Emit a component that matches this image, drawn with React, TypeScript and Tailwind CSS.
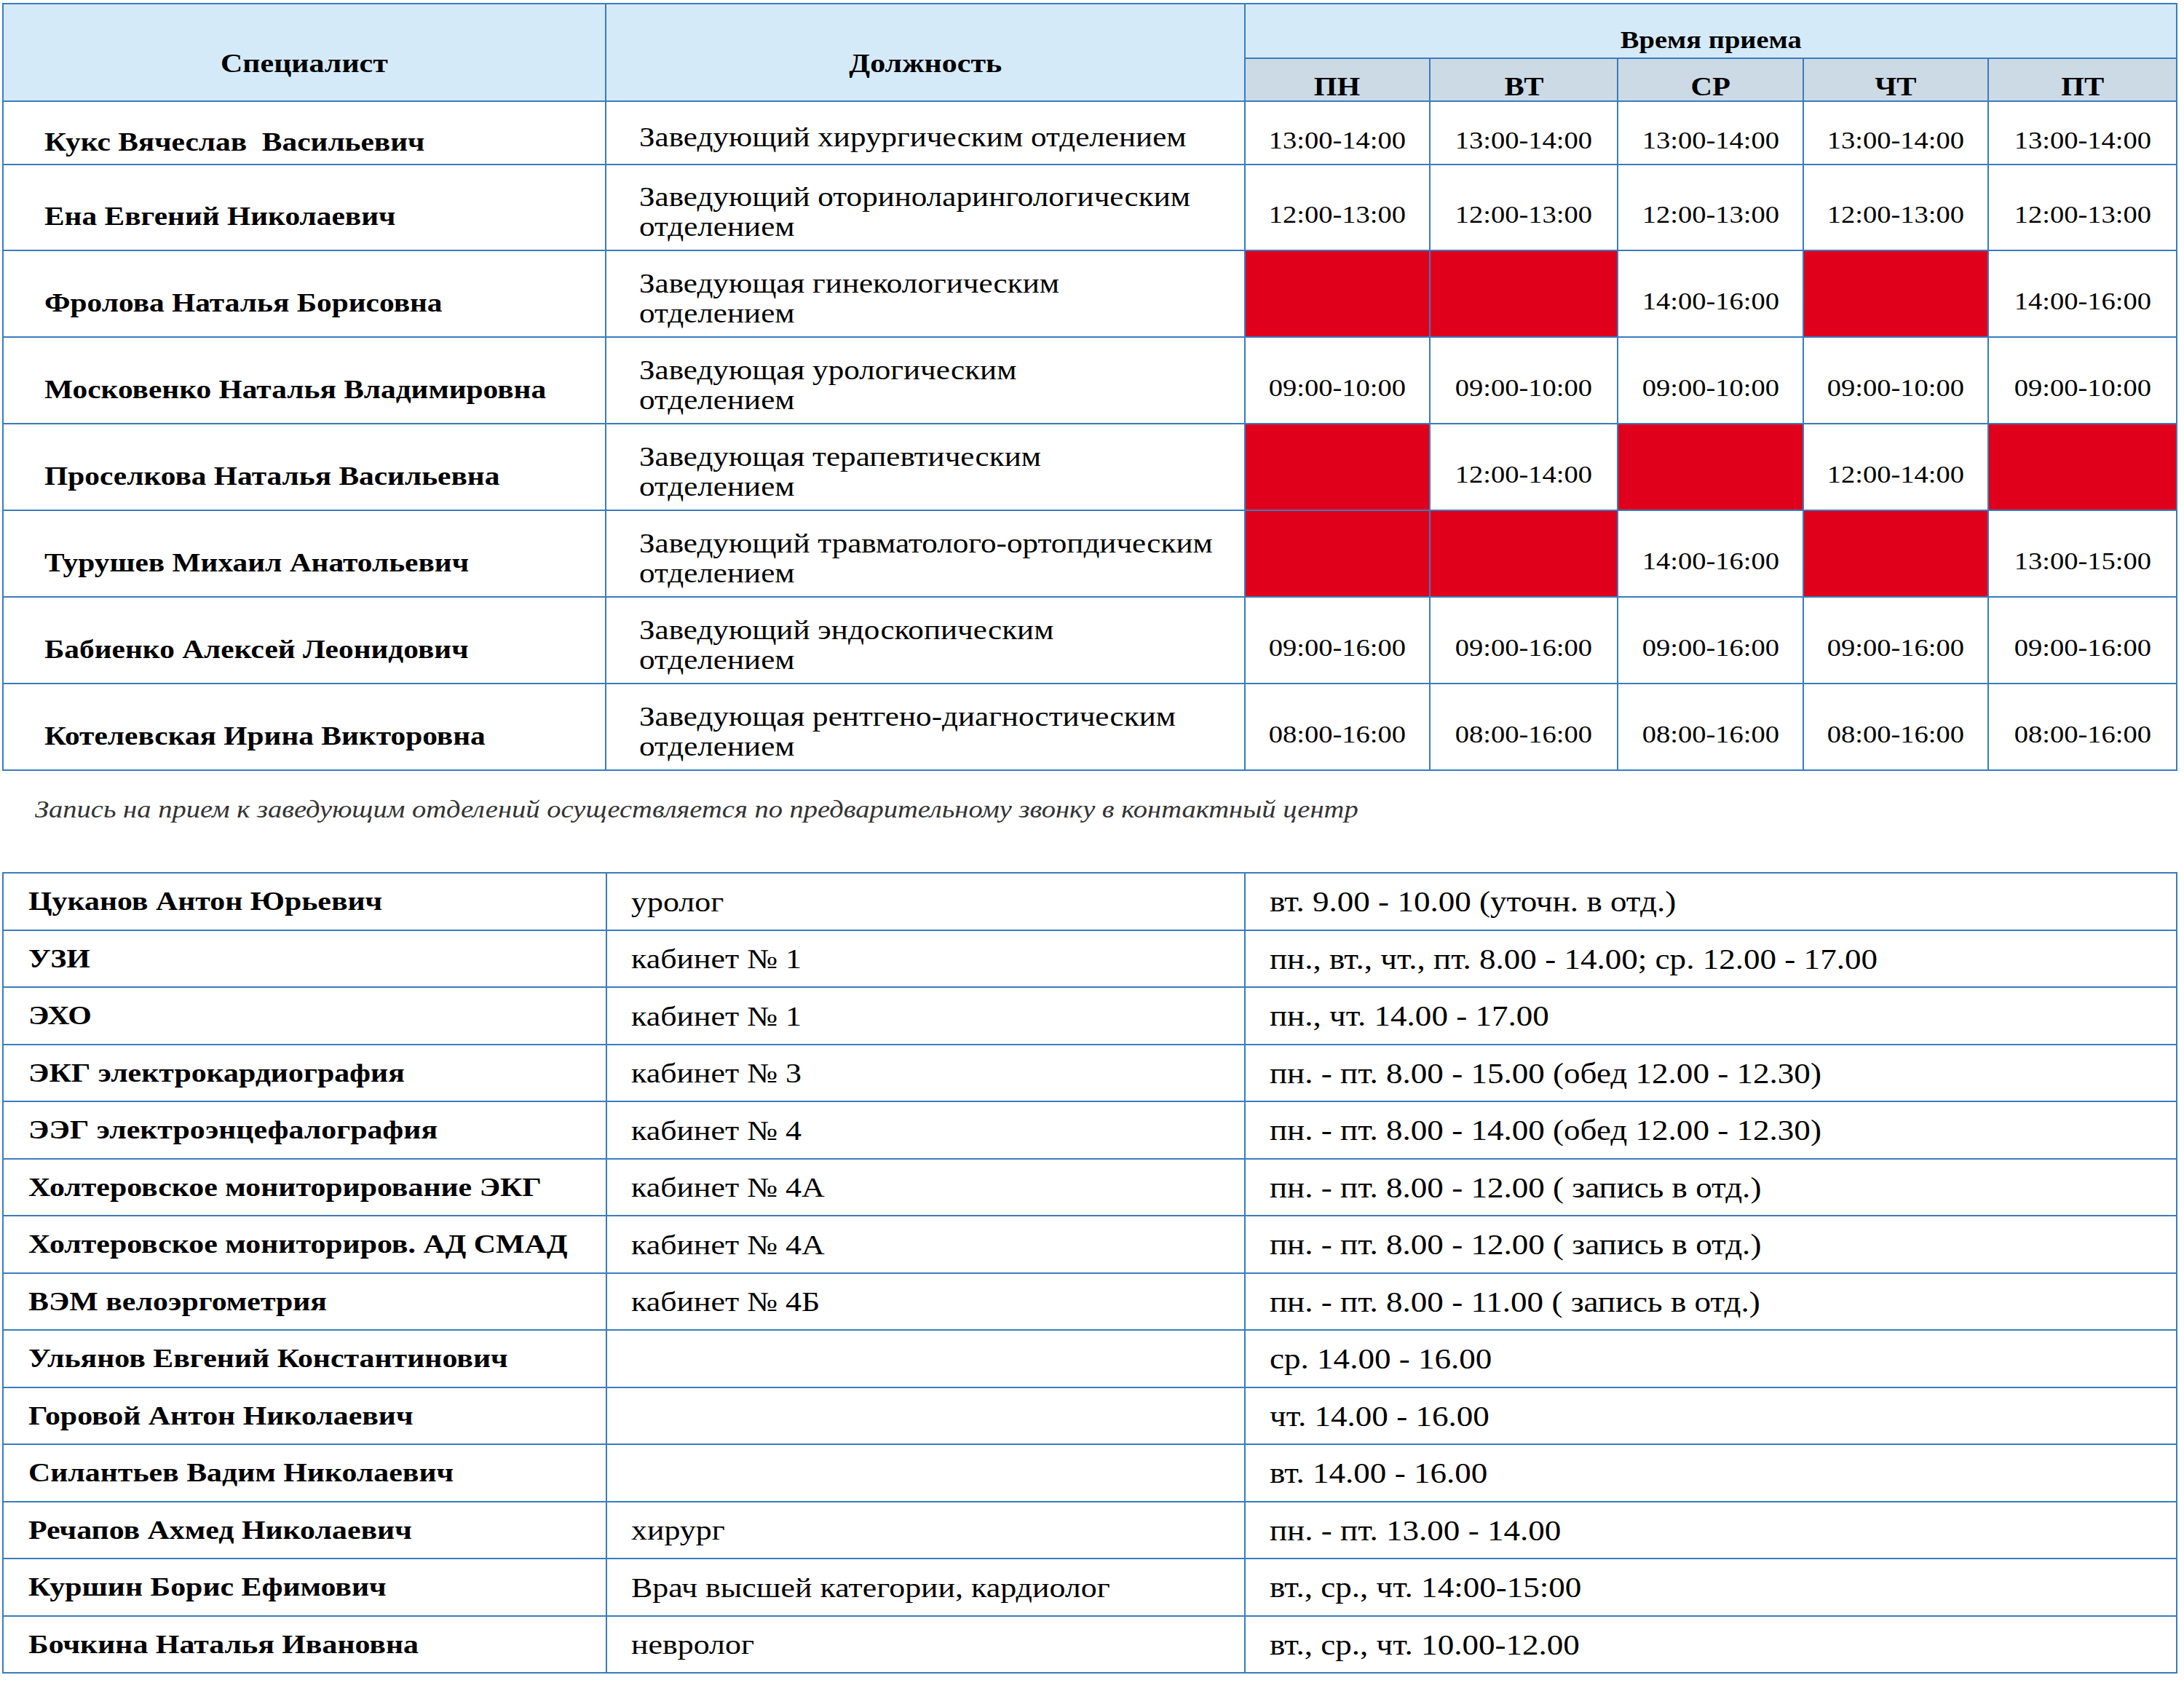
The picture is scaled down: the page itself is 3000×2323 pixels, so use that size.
import React from "react";

type Cell = string | null;

const t1Rows: { name: string; pos: string[]; times: Cell[]; h: string }[] = [
  { name: "Кукс Вячеслав  Васильевич", pos: ["Заведующий хирургическим отделением"], times: ["13:00-14:00", "13:00-14:00", "13:00-14:00", "13:00-14:00", "13:00-14:00"], h: "h-[87px]" },
  { name: "Ена Евгений Николаевич", pos: ["Заведующий оториноларингологическим", "отделением"], times: ["12:00-13:00", "12:00-13:00", "12:00-13:00", "12:00-13:00", "12:00-13:00"], h: "h-[118px]" },
  { name: "Фролова Наталья Борисовна", pos: ["Заведующая гинекологическим", "отделением"], times: [null, null, "14:00-16:00", null, "14:00-16:00"], h: "h-[119px]" },
  { name: "Московенко Наталья Владимировна", pos: ["Заведующая урологическим", "отделением"], times: ["09:00-10:00", "09:00-10:00", "09:00-10:00", "09:00-10:00", "09:00-10:00"], h: "h-[119px]" },
  { name: "Проселкова Наталья Васильевна", pos: ["Заведующая терапевтическим", "отделением"], times: [null, "12:00-14:00", null, "12:00-14:00", null], h: "h-[119px]" },
  { name: "Турушев Михаил Анатольевич", pos: ["Заведующий травматолого-ортопдическим", "отделением"], times: [null, null, "14:00-16:00", null, "13:00-15:00"], h: "h-[119px]" },
  { name: "Бабиенко Алексей Леонидович", pos: ["Заведующий эндоскопическим", "отделением"], times: ["09:00-16:00", "09:00-16:00", "09:00-16:00", "09:00-16:00", "09:00-16:00"], h: "h-[119px]" },
  { name: "Котелевская Ирина Викторовна", pos: ["Заведующая рентгено-диагностическим", "отделением"], times: ["08:00-16:00", "08:00-16:00", "08:00-16:00", "08:00-16:00", "08:00-16:00"], h: "h-[119px]" },
];

const t2Rows: [string, string, string][] = [
  ["Цуканов Антон Юрьевич", "уролог", "вт. 9.00 - 10.00 (уточн. в отд.)"],
  ["УЗИ", "кабинет № 1", "пн., вт., чт., пт. 8.00 - 14.00; ср. 12.00 - 17.00"],
  ["ЭХО", "кабинет № 1", "пн., чт. 14.00 - 17.00"],
  ["ЭКГ электрокардиография", "кабинет № 3", "пн. - пт. 8.00 - 15.00 (обед 12.00 - 12.30)"],
  ["ЭЭГ электроэнцефалография", "кабинет № 4", "пн. - пт. 8.00 - 14.00 (обед 12.00 - 12.30)"],
  ["Холтеровское мониторирование ЭКГ", "кабинет № 4А", "пн. - пт. 8.00 - 12.00 ( запись в отд.)"],
  ["Холтеровское мониториров. АД СМАД", "кабинет № 4А", "пн. - пт. 8.00 - 12.00 ( запись в отд.)"],
  ["ВЭМ велоэргометрия", "кабинет № 4Б", "пн. - пт. 8.00 - 11.00 ( запись в отд.)"],
  ["Ульянов Евгений Константинович", "", "ср. 14.00 - 16.00"],
  ["Горовой Антон Николаевич", "", "чт. 14.00 - 16.00"],
  ["Силантьев Вадим Николаевич", "", "вт. 14.00 - 16.00"],
  ["Речапов Ахмед Николаевич", "хирург", "пн. - пт. 13.00 - 14.00"],
  ["Куршин Борис Ефимович", "Врач высшей категории, кардиолог", "вт., ср., чт. 14:00-15:00"],
  ["Бочкина Наталья Ивановна", "невролог", "вт., ср., чт. 10.00-12.00"],
];

const days = ["ПН", "ВТ", "СР", "ЧТ", "ПТ"];

function L({ children }: { children: React.ReactNode }) {
  return <span className="inline-block whitespace-pre origin-left scale-x-[1.15]">{children}</span>;
}
function C({ children }: { children: React.ReactNode }) {
  return <span className="inline-block whitespace-pre origin-center scale-x-[1.15]">{children}</span>;
}

export default function App() {
  return (
    <div className="w-[3000px] h-[2323px] bg-white text-black pt-[4px] pl-[3px] font-['Liberation_Serif','Times_New_Roman',serif]">
      <table className="table-fixed border-collapse w-[2986px]">
        <colgroup>
          <col className="w-[828px]" />
          <col className="w-[878px]" />
          <col className="w-[254px]" />
          <col className="w-[258px]" />
          <col className="w-[255px]" />
          <col className="w-[254px]" />
          <col className="w-[259px]" />
        </colgroup>
        <thead>
          <tr className="h-[75px]">
            <th rowSpan={2} className="border-2 border-[#3a7cbd] bg-[#d5eaf8] text-[36.5px] font-bold text-center align-middle pt-[30px] p-0 leading-none">
              <C>Специалист</C>
            </th>
            <th rowSpan={2} className="border-2 border-[#3a7cbd] bg-[#d5eaf8] text-[36.5px] font-bold text-center align-middle pt-[30px] p-0 leading-none">
              <C>Должность</C>
            </th>
            <th colSpan={5} className="border-2 border-[#3a7cbd] bg-[#d5eaf8] text-[33.5px] font-bold text-center align-middle pt-[24px] leading-none">
              <C>Время приема</C>
            </th>
          </tr>
          <tr className="h-[59px]">
            {days.map((d) => (
              <th key={d} className="border-2 border-[#3a7cbd] bg-[#ccdae6] text-[35.5px] font-bold text-center align-middle pt-[20px] leading-none">
                <C>{d}</C>
              </th>
            ))}
          </tr>
        </thead>
        <tbody>
          {t1Rows.map((r, i) => (
            <tr key={i} className={r.h}>
              <td className="border-2 border-[#3a7cbd] pl-[56px] pt-[24px] align-middle text-[36px] font-bold leading-none">
                <L>{r.name}</L>
              </td>
              <td className="border-2 border-[#3a7cbd] pl-[45px] pt-[12px] align-middle text-[37.5px] leading-[41px]">
                {r.pos.map((p, j) => (
                  <div key={j}>
                    <L>{p}</L>
                  </div>
                ))}
              </td>
              {r.times.map((t, j) =>
                t === null ? (
                  <td key={j} className="border-2 border-[#3a7cbd] bg-[#e1001b]" />
                ) : (
                  <td key={j} className="border-2 border-[#3a7cbd] text-center align-middle pt-[20px] text-[33.5px] leading-none">
                    <C>{t}</C>
                  </td>
                )
              )}
            </tr>
          ))}
        </tbody>
      </table>

      <div className="h-[139px] pt-[33px] pl-[45px] text-[33.5px] italic text-[#333333] leading-[40px]">
        <L>Запись на прием к заведующим отделений осуществляется по предварительному звонку в контактный центр</L>
      </div>

      <table className="table-fixed border-collapse w-[2986px]">
        <colgroup>
          <col className="w-[829px]" />
          <col className="w-[877px]" />
          <col className="w-[1280px]" />
        </colgroup>
        <tbody>
          {t2Rows.map((r, i) => (
            <tr key={i} className="h-[78.5px]">
              <td className="border-2 border-[#3a7cbd] pl-[34px] align-middle text-[36.4px] font-bold leading-none">
                <L>{r[0]}</L>
              </td>
              <td className="border-2 border-[#3a7cbd] pl-[33px] pt-[1px] align-middle text-[38.2px] leading-none">
                <L>{r[1]}</L>
              </td>
              <td className="border-2 border-[#3a7cbd] pl-[33px] pt-[1px] align-middle text-[39.2px] leading-none">
                <L>{r[2]}</L>
              </td>
            </tr>
          ))}
        </tbody>
      </table>
    </div>
  );
}
